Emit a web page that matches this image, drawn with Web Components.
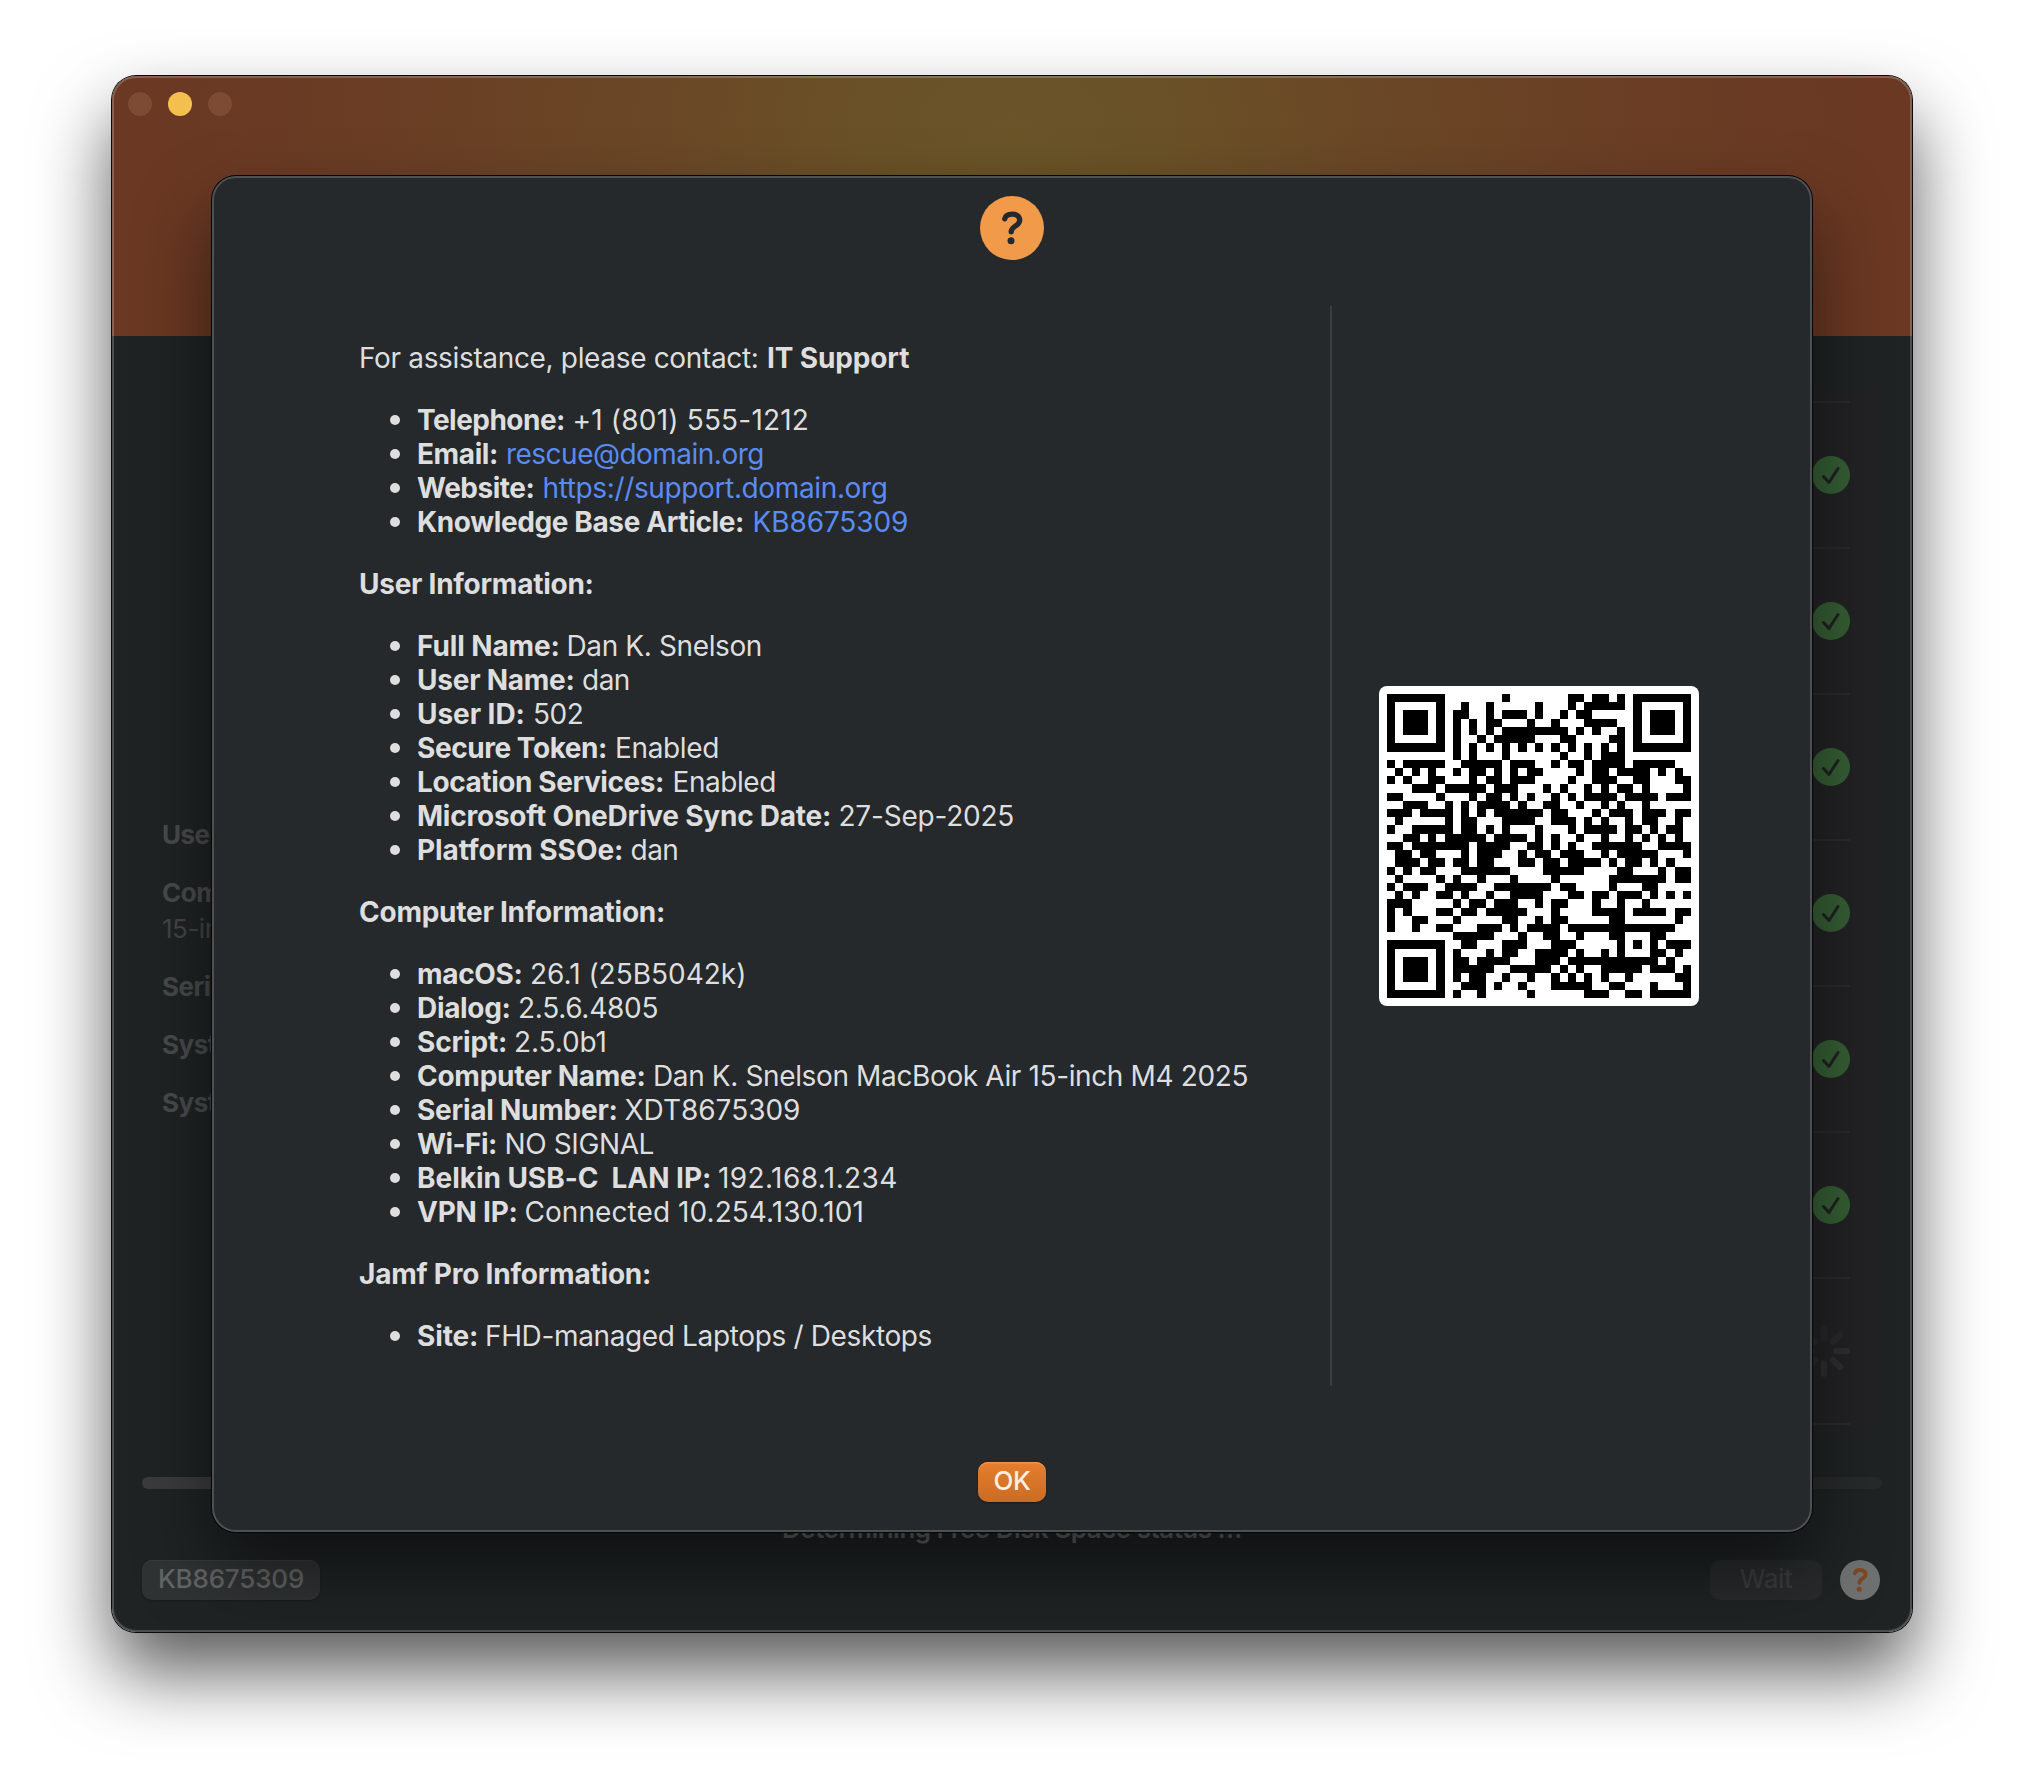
<!DOCTYPE html>
<html lang="en"><head><meta charset="utf-8"><title>IT Support</title>
<style>
html,body{margin:0;background:#fff}
body{width:2024px;height:1780px;overflow:hidden;font-family:Inter,"Liberation Sans",sans-serif;font-optical-sizing:none}
</style></head><body>
<app-window></app-window>
<script>
const define=(name,html,init)=>{
  const t=document.createElement('template');t.innerHTML=html;
  customElements.define(name,class extends HTMLElement{
    constructor(){super();this.attachShadow({mode:'open'}).append(t.content.cloneNode(true));}
    connectedCallback(){if(init)init.call(this,this.shadowRoot);}
  });
};

/* Text tracked so that its drawn width equals the "w" attribute. */
define('fit-text',`<style>:host{display:inline-block;white-space:pre}span{display:inline-block}</style><span></span>`,function(r){
  const s=r.querySelector('span');s.textContent=this.getAttribute('text');
  const w=+this.getAttribute('w');
  if(w){const n=s.textContent.length;const nat=s.getBoundingClientRect().width;s.style.letterSpacing=((w+2.4-nat)/(n-1)).toFixed(3)+'px';}
});

define('help-icon',`<style>:host{display:block;width:var(--d);height:var(--d)}svg{display:block;width:100%;height:100%}g{transform:scale(var(--s,1));transform-origin:32px 32px}</style>
<svg viewBox="0 0 64 64"><circle cx="32" cy="32" r="32" fill="var(--disc)"/>
<g><path d="M24.7 22.8C25.4 19.8 28.2 18.1 32.2 18.1C36.7 18.1 39.7 20.5 39.7 24.3C39.7 30.3 31.2 30 31.2 35.8" fill="none" stroke="var(--mark)" stroke-width="5.3" stroke-linecap="round" stroke-linejoin="round"/>
<circle cx="31" cy="44.8" r="3.5" fill="var(--mark)"/></g></svg>`);

define('check-icon',`<style>:host{display:block;width:38px;height:38px}svg{display:block}</style>
<svg width="38" height="38" viewBox="0 0 38 38"><circle cx="19" cy="19" r="19" fill="#355e34"/><path d="M11.5 20.5L17 26.5L26 12.5" fill="none" stroke="#202122" stroke-width="3" stroke-linecap="round" stroke-linejoin="round"/></svg>`);

define('spinner-icon',`<style>:host{display:block;width:52px;height:52px}svg{display:block}</style><svg width="52" height="52" viewBox="-26 -26 52 52" stroke="#2f2f31" stroke-width="6.4" stroke-linecap="round"></svg>`,function(r){
  const o=[.45,.6,.95,.95,.95,.8,.7,.6];
  r.querySelector('svg').innerHTML=o.map((a,i)=>`<line y1="-12.6" y2="-22.8" opacity="${a}" transform="rotate(${i*45})"/>`).join('');
});

/* Dark modules of each row, as column numbers and ranges. */
const QR=`
0-6 14 22,23 25,26 28 30-36
0 6 9 12 18 22 24-28 30 36
0 2-4 6 8,9 12 14-16 18 21 23,24 30 32-34 36
0 2-4 6 8 10 12,13 17 20 24-27 30 32-34 36
0 2-4 6 8 10 12 14-21 23 25 28 30 32-34 36
0 6 8 11 13-17 21,22 27,28 30 36
0-6 8 10 12 14 16 18 20 22 24 26 28 30-36
8 10 14 21 24 26-28
0 2-6 9-13 15-17 20 22,23 25-28 30-34
1 3 5 8 10,11 13 15 17,18 23 25,26 28-31 33 35
0 2 5,6 10 12,13 15-17 22 25-27 30,31 35,36
3-5 7-11 13-15 19 21 24 26 28,29 31 36
0,1 6 10 12,13 15 17 20 22 24-27 29-32 34-36
2-4 7 9 11-14 16 19,20 23 26 28 31
0-2 4-7 9 11 13-18 20,21 25 27-29 31-33 35,36
1 7 9,10 14-17 20-22 24 26 29 31,32 35
0 3-7 9,10 12 14 18 22 24-27 29,30 32 34,35
2,3 5 7-11 13-16 18 20 23 26 29 31 33 35
0,1 3-9 11-14 17,18 20 22 25-30 33-36
1,2 4,5 9 11-13 16 18,19 21-23 26 28-32 36
1-3 5,6 8,9 11,12 16,17 19,20 22-25 27 29,30 32 34
0 2 4,5 9-14 19-23 28,29 33 35,36
1 6 8 11 15 20 27-33 35,36
0 2-4 7-10 13-19 21,22 27 31,32
1 3 6,7 9 12 15-18 22,23 25,26 28-30 32 34 36
0-2 8 10,11 13-15 18 20,21 25 28 31
0 2 6,7 9,10 12-16 20 25-28 30-33 35,36
0 3,4 8 14,15 18 20,21 27,28 35
0 3 6,7 11-13 15 17-20 22-34
8-12 16 19,20 23 27,28 32,33
0-6 9,10 14-16 20-22 28 30 32 34-36
0 6 8 12 14,15 18-21 23 26 28 32,33 35
0 2-4 6 8,9 11-14 18-20 22-32 34
0 2-4 6 8-12 15-19 21 23 26-30 32-34 36
0 2-4 6 8 10,11 14 17 20 22 24 26 29 35,36
0 6 9-11 13 16 20-24 27,28 32 36
0-6 8 11 17 24-26 29,30 32-36`.trim().split('\n');
define('qr-code',`<style>:host{display:block;background:#fff;border-radius:8px;padding:8px;width:304px;height:304px}svg{display:block}</style><svg width="304" height="304" viewBox="0 0 37 37" shape-rendering="crispEdges"><path fill="#000"/></svg>`,function(r){
  let d='';
  QR.forEach((row,y)=>row.split(/[ ,]/).forEach(p=>{const [a,b]=p.split('-');for(let x=+a;x<=+(b||a);x++)d+=`M${x} ${y}h1v1h-1z`;}));
  r.querySelector('path').setAttribute('d',d);
});

define('info-item',`<style>:host{display:flex;height:34px;align-items:center;line-height:34px;padding-left:31px}
i{width:10px;height:10px;border-radius:50%;background:#dedede;margin-right:17px;flex:none}
.l{flex:none;font-weight:670}.v{color:var(--value,#dedede)}</style><i></i><span class="l"></span><span class="v"></span>`,function(r){
  const [lw,vx,vw]=this.getAttribute('m').split(' ').map(Number);
  const l=r.querySelector('.l'),v=r.querySelector('.v');
  const mk=(t,w)=>{const e=document.createElement('fit-text');e.setAttribute('text',t);e.setAttribute('w',w);return e;};
  l.style.width=(vx-2-416)+'px';
  if(this.hasAttribute('link'))this.style.setProperty('--value','#5a8bf2');
  l.append(mk(this.getAttribute('label'),lw));v.append(mk(this.getAttribute('value'),vw));
});

define('info-panel',`<style>:host{display:block;font-size:28px;font-weight:415;color:#dedede;line-height:34px}
.p{height:34px;display:flex}b{font-weight:670}.g{padding:28px 0}.g:last-child{padding-bottom:0}</style>
<div class="p"><fit-text text="For assistance, please contact:" w="397.5" style="width:408px"></fit-text><b><fit-text text="IT Support" w="140"></fit-text></b></div>
<div class="g">
<info-item label="Telephone:" value="+1 (801) 555-1212" m="146 573.5 234"></info-item>
<info-item link label="Email:" value="rescue@domain.org" m="79 507 256"></info-item>
<info-item link label="Website:" value="https://support.domain.org" m="115.5 543.5 343"></info-item>
<info-item link label="Knowledge Base Article:" value="KB8675309" m="325 753.5 153.5"></info-item></div>
<div class="p"><b><fit-text text="User Information:" w="232.5"></fit-text></b></div>
<div class="g">
<info-item label="Full Name:" value="Dan K. Snelson" m="140.5 567.5 193.5"></info-item>
<info-item label="User Name:" value="dan" m="155.5 583 46"></info-item>
<info-item label="User ID:" value="502" m="105.5 534 48.5"></info-item>
<info-item label="Secure Token:" value="Enabled" m="188 616 102"></info-item>
<info-item label="Location Services:" value="Enabled" m="245 673.5 101.5"></info-item>
<info-item label="Microsoft OneDrive Sync Date:" value="27-Sep-2025" m="412 839.5 173.5"></info-item>
<info-item label="Platform SSOe:" value="dan" m="204 631.5 46"></info-item></div>
<div class="p"><b><fit-text text="Computer Information:" w="304"></fit-text></b></div>
<div class="g">
<info-item label="macOS:" value="26.1 (25B5042k)" m="103.5 531 214"></info-item>
<info-item label="Dialog:" value="2.5.6.4805" m="91.5 519 138"></info-item>
<info-item label="Script:" value="2.5.0b1" m="88 515 90.5"></info-item>
<info-item label="Computer Name:" value="Dan K. Snelson MacBook Air 15-inch M4 2025" m="226.5 654 593"></info-item>
<info-item label="Serial Number:" value="XDT8675309" m="198.5 625.5 173.5"></info-item>
<info-item label="Wi-Fi:" value="NO SIGNAL" m="78 505.5 147.5"></info-item>
<info-item label="Belkin USB-C  LAN IP:" value="192.168.1.234" m="292 719 177"></info-item>
<info-item label="VPN IP:" value="Connected 10.254.130.101" m="98.5 525.5 337"></info-item></div>
<div class="p"><b><fit-text text="Jamf Pro Information:" w="290"></fit-text></b></div>
<div class="g"><info-item label="Site:" value="FHD-managed Laptops / Desktops" m="59 486 445"></info-item></div>`);

define('push-button',`<style>:host{display:flex;align-items:center;justify-content:center;box-sizing:border-box;height:40px;border-radius:10px;font-size:26px;line-height:38px;padding-bottom:2px}</style><slot></slot>`);

define('help-dialog',`<style>:host{display:flex;flex-direction:column;align-items:center;box-sizing:border-box;width:1600px;height:1356px;border-radius:24px;background:#25292c;border:2px solid #4d5154;box-shadow:0 0 0 1px #050505,0 36px 70px rgba(0,0,0,.5)}
help-icon{--d:64px;--disc:#f19a49;--mark:#25292c;margin-top:18px}
main{display:flex;align-self:stretch;margin-top:46px;height:1080px}
info-panel{padding-top:35px;padding-left:145px;width:971px}
hr{margin:0;border:0;width:2px;height:1080px;background:#3a3e41}
aside{flex:1;display:flex;align-items:flex-start;padding:380px 0 0 47px}
push-button{width:68px;margin-top:76px;background:linear-gradient(#e67e2d,#ca6c24);color:#fdeee2;font-weight:500;box-shadow:inset 0 1.5px 0 #eb9650,0 1px 2px #0006}</style>
<help-icon></help-icon><main><info-panel></info-panel><hr><aside><qr-code></qr-code></aside></main>
<push-button><fit-text text="OK" w="35"></fit-text></push-button>`);

define('status-list',`<style>:host{display:block;box-sizing:border-box;width:600px;height:1046px;border-radius:16px;background:#222224;padding:14px 32px 0}
.r{box-sizing:border-box;height:146px;border-top:2px solid #2a2a2c;display:flex;align-items:center;justify-content:flex-end}.r.e{height:2px}</style>
${'<div class="r"><check-icon></check-icon></div>'.repeat(6)}<div class="r"><spinner-icon></spinner-icon></div><div class="r e"></div>`);

define('window-controls',`<style>:host{display:flex;gap:16px;padding:16px 0 0 16px}i{width:24px;height:24px;border-radius:50%;background:#7d4a33}i:nth-of-type(2){background:#f5bf4f}</style><i></i><i></i><i></i>`);

define('side-info',`<style>:host{display:block;font-size:26px;line-height:36px;color:#484a4b}p{margin:0 0 22px;height:36px;font-weight:670;letter-spacing:-.5px}p.t{margin-bottom:0}p.n{font-weight:415;color:#434546}</style>
<p>User</p><p class="t">Comp</p><p class="n">15-inch</p><p>Serial</p><p>System</p><p>System</p>`);

define('app-window',`<style>:host{display:block;padding:76px 112px 0}
.win{position:relative;width:1800px;height:1556px;border-radius:24px;box-shadow:0 0 0 1px #0a0a0a,0 40px 74px rgba(0,0,0,.65)}
.clip{position:relative;display:flex;flex-direction:column;height:100%;border-radius:24px;overflow:hidden;background:#1f2324}
.banner{height:260px;background:radial-gradient(ellipse 860px 560px at 50% 20%,#6a5428 0,#6a5127 18%,#6a4626 45%,#6a3d24 75%,#6a3823 100%)}
.mid{height:1141px;display:flex;justify-content:space-between;padding:0 30px 0 50px;box-sizing:border-box}
side-info{margin-top:481px}status-list{margin-top:51px}
.bar{height:12px;margin:0 30px;border-radius:6px;background:linear-gradient(90deg,#3b3b3d 60%,#272a2b 60%);flex:none}
.status{height:36px;margin-top:22px;text-align:center;line-height:36px;font-size:26px;font-weight:600;color:#626263}
footer{display:flex;align-items:center;margin:13px 30px 0;height:40px}
.kb{width:178px;background:#303333;color:#636567;box-shadow:inset 0 1px 0 #393b3b,0 1px 2px #0003;font-weight:500}
.wait{width:112px;margin-left:auto;margin-right:18px;background:#292a2c;color:#393b3d;font-weight:500}
footer help-icon{--d:40px;--s:1.15;--disc:#6e7170;--mark:#7d4822;margin-right:2px}
.edge{position:absolute;inset:0;border-radius:24px;border:2px solid rgba(255,255,255,.2);pointer-events:none}
help-dialog{position:absolute;left:100px;top:100px}</style>
<div class="win"><div class="clip"><div class="banner"><window-controls></window-controls></div>
<div class="mid"><side-info></side-info><status-list></status-list></div>
<div class="bar"></div><div class="status"><fit-text text="Determining Free Disk Space status …" w="458"></fit-text></div>
<footer><push-button class="kb"><fit-text text="KB8675309" w="144"></fit-text></push-button><push-button class="wait"><fit-text text="Wait" w="51"></fit-text></push-button><help-icon></help-icon></footer>
<help-dialog></help-dialog></div><div class="edge"></div></div>`);
</script></body></html>
